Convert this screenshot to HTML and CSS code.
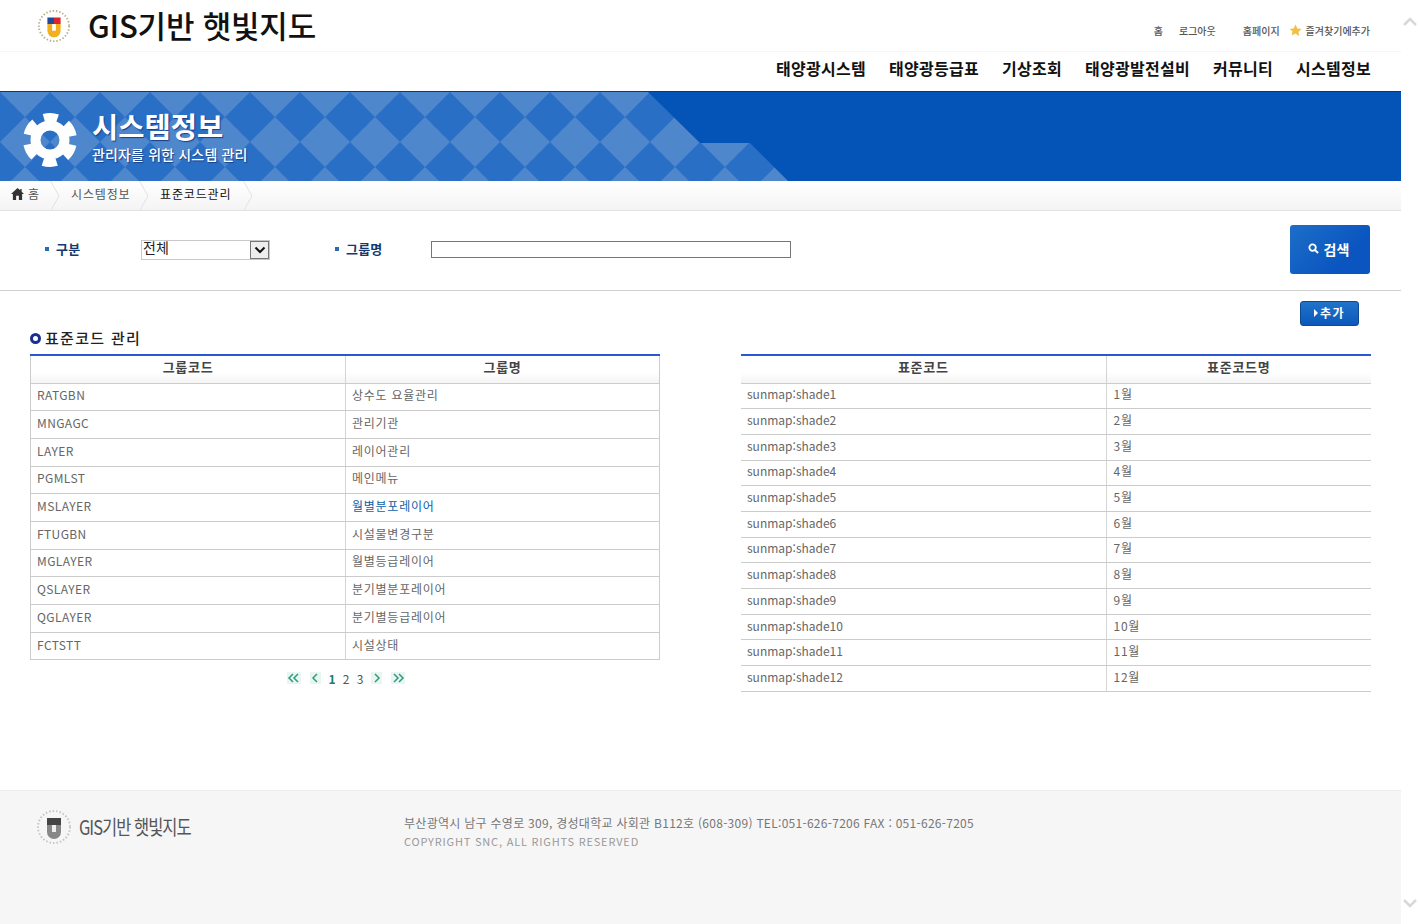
FILE: index.html
```html
<!DOCTYPE html>
<html lang="ko">
<head>
<meta charset="utf-8">
<title>GIS기반 햇빛지도</title>
<link rel="stylesheet" href="styles.css">
</head>
<body>
<div class="page">
  <header class="header">
    <div class="topbar">
      <a class="logo">
        <svg class="seal" viewBox="0 0 36 36" width="34" height="34" aria-hidden="true">
          <circle cx="18" cy="18" r="16" fill="none" stroke="#b9b08a" stroke-width="2" stroke-dasharray="1.5 2"/>
          <rect x="11" y="9" width="7" height="7" fill="#1f4a9c"/>
          <rect x="18" y="9" width="7" height="7" fill="#d8262c"/>
          <path d="M11 16h14v7a7 7 0 0 1-14 0z" fill="#f2b01e"/>
          <path d="M16 16h4v7h-4z" fill="#fff"/>
        </svg>
        <span class="logo-text">GIS기반 햇빛지도</span>
      </a>
      <div class="util">
        <span class="u1">홈</span>
        <span class="u2">로그아웃</span>
        <span class="u3">홈페이지</span>
        <svg class="star" viewBox="0 0 12 12" width="13" height="13" aria-hidden="true"><path d="M6 .5l1.7 3.6 3.9.5-2.9 2.7.8 3.9L6 8.8 2.5 10.7l.8-3.9L.4 4.6l3.9-.5z" fill="#f0c040"/></svg>
        <span class="u4">즐겨찾기에추가</span>
      </div>
    </div>
    <nav class="gnb">
      <a>태양광시스템</a><a>태양광등급표</a><a>기상조회</a><a>태양광발전설비</a><a>커뮤니티</a><a>시스템정보</a>
    </nav>
  </header>

  <section class="banner">
    <svg class="banner-bg" width="800" height="90" aria-hidden="true">
      <defs>
        <pattern id="dia" width="50" height="50" patternUnits="userSpaceOnUse" x="-25" y="0">
          <rect width="50" height="50" fill="#4f87cc"/>
          <path d="M25 0L50 25L25 50L0 25z" fill="#2a6fc6"/>
        </pattern>
      </defs>
      <path d="M0 0H648L700 51H750L789 90H0z" fill="url(#dia)"/>
    </svg>
    <svg class="gear" viewBox="0 0 54 54" width="54" height="54" aria-hidden="true">
      <circle cx="27" cy="27" r="14.5" fill="none" stroke="#fff" stroke-width="10"/>
      <circle cx="27" cy="27" r="23" fill="none" stroke="#fff" stroke-width="8" stroke-dasharray="14 10.09" stroke-dashoffset="-5.04"/>
    </svg>
    <div class="banner-text">
      <h1>시스템정보</h1>
      <p>관리자를 위한 시스템 관리</p>
    </div>
  </section>

  <nav class="crumbs">
    <span class="crumb home">
      <svg viewBox="0 0 14 13" width="13" height="12" aria-hidden="true"><path d="M7 0L0 6.500h2V13h3.500V8.500h3V13H12V6.500h2L11.500 4V1H10v1.500z" fill="#333"/></svg>
      <span>홈</span>
    </span>
    <svg class="sep" viewBox="0 0 10 30" width="10" height="30" aria-hidden="true"><path d="M.5 0l8.500 15L.5 30" fill="none" stroke="#e2e2e2"/></svg>
    <span class="crumb sys">시스템정보</span>
    <svg class="sep" viewBox="0 0 10 30" width="10" height="30" aria-hidden="true"><path d="M.5 0l8.500 15L.5 30" fill="none" stroke="#e2e2e2"/></svg>
    <span class="crumb cur">표준코드관리</span>
    <svg class="sep" viewBox="0 0 10 30" width="10" height="30" aria-hidden="true"><path d="M.5 0l8.500 15L.5 30" fill="none" stroke="#e2e2e2"/></svg>
  </nav>

  <form class="search">
    <label class="lab lab1">구분</label>
    <div class="fakeselect">
      <span class="fs-val">전체</span>
      <span class="fs-arrow"><svg viewBox="0 0 12 8" width="12" height="8" aria-hidden="true"><path d="M1.500 1.500L6 6l4.500-4.500" fill="none" stroke="#111" stroke-width="2"/></svg></span>
    </div>
    <label class="lab lab2">그룹명</label>
    <input class="group-input" type="text">
    <button type="button" class="btn-search">
      <svg viewBox="0 0 12 12" width="11" height="11" aria-hidden="true"><circle cx="5" cy="5" r="3.500" fill="none" stroke="#fff" stroke-width="2"/><path d="M7.500 7.500L11 11" stroke="#fff" stroke-width="2.200"/></svg>
      <span>검색</span>
    </button>
  </form>

  <div class="actions">
    <button type="button" class="btn-add"><i class="tri"></i>추가</button>
  </div>

  <main class="tables">
    <section class="left">
      <h2 class="sec-title"><i class="ring"></i>표준코드 관리</h2>
      <table class="grid boxed">
        <colgroup><col class="c-l1"><col></colgroup>
        <thead><tr><th>그룹코드</th><th>그룹명</th></tr></thead>
        <tbody>
          <tr><td>RATGBN</td><td>상수도 요율관리</td></tr>
          <tr><td>MNGAGC</td><td>관리기관</td></tr>
          <tr><td>LAYER</td><td>레이어관리</td></tr>
          <tr><td>PGMLST</td><td>메인메뉴</td></tr>
          <tr><td>MSLAYER</td><td><a class="hl">월별분포레이어</a></td></tr>
          <tr><td>FTUGBN</td><td>시설물변경구분</td></tr>
          <tr><td>MGLAYER</td><td>월별등급레이어</td></tr>
          <tr><td>QSLAYER</td><td>분기별분포레이어</td></tr>
          <tr><td>QGLAYER</td><td>분기별등급레이어</td></tr>
          <tr><td>FCTSTT</td><td>시설상태</td></tr>
        </tbody>
      </table>
      <div class="pager">
        <i class="pg dbl"><svg viewBox="0 0 14 10" width="14" height="10" aria-hidden="true"><path d="M6 1L2 5l4 4M11 1L7 5l4 4" fill="none" stroke="#2f9a80" stroke-width="1.500"/></svg></i>
        <i class="pg sgl"><svg viewBox="0 0 11 10" width="11" height="10" aria-hidden="true"><path d="M7 1L3 5l4 4" fill="none" stroke="#2f9a80" stroke-width="1.500"/></svg></i>
        <b class="num">1</b><span class="num">2</span><span class="num">3</span>
        <i class="pg sgl2"><svg viewBox="0 0 11 10" width="11" height="10" aria-hidden="true"><path d="M4 1l4 4-4 4" fill="none" stroke="#2f9a80" stroke-width="1.500"/></svg></i>
        <i class="pg dbl"><svg viewBox="0 0 14 10" width="14" height="10" aria-hidden="true"><path d="M3 1l4 4-4 4M8 1l4 4-4 4" fill="none" stroke="#2f9a80" stroke-width="1.500"/></svg></i>
      </div>
    </section>
    <section class="right">
      <table class="grid tight">
        <colgroup><col class="c-r1"><col></colgroup>
        <thead><tr><th>표준코드</th><th>표준코드명</th></tr></thead>
        <tbody>
          <tr><td>sunmap:shade1</td><td>1월</td></tr>
          <tr><td>sunmap:shade2</td><td>2월</td></tr>
          <tr><td>sunmap:shade3</td><td>3월</td></tr>
          <tr><td>sunmap:shade4</td><td>4월</td></tr>
          <tr><td>sunmap:shade5</td><td>5월</td></tr>
          <tr><td>sunmap:shade6</td><td>6월</td></tr>
          <tr><td>sunmap:shade7</td><td>7월</td></tr>
          <tr><td>sunmap:shade8</td><td>8월</td></tr>
          <tr><td>sunmap:shade9</td><td>9월</td></tr>
          <tr><td>sunmap:shade10</td><td>10월</td></tr>
          <tr><td>sunmap:shade11</td><td>11월</td></tr>
          <tr><td>sunmap:shade12</td><td>12월</td></tr>
        </tbody>
      </table>
    </section>
  </main>

  <footer class="footer">
    <div class="f-logo">
      <svg viewBox="0 0 36 36" width="36" height="36" aria-hidden="true">
        <circle cx="18" cy="18" r="16" fill="none" stroke="#c4c4c4" stroke-width="2" stroke-dasharray="1.500 2"/>
        <rect x="11" y="9" width="14" height="7" fill="#444"/>
        <path d="M11 16h14v7a7 7 0 0 1-14 0z" fill="#888"/>
        <path d="M16 16h4v7h-4z" fill="#eee"/>
      </svg>
      <span>GIS기반 햇빛지도</span>
    </div>
    <div class="f-text">
      <p class="addr">부산광역시 남구 수영로 309, 경성대학교 사회관 B112호 (608-309) TEL:051-626-7206 FAX : 051-626-7205</p>
      <p class="copy">COPYRIGHT SNC, ALL RIGHTS RESERVED</p>
    </div>
  </footer>
</div>
<div class="scrollbar" aria-hidden="true">
  <svg viewBox="0 0 14 10" width="14" height="10"><path d="M1 8l6-6 6 6" fill="none" stroke="#d8d8d8" stroke-width="2.500"/></svg>
  <svg viewBox="0 0 14 10" width="14" height="10"><path d="M1 2l6 6 6-6" fill="none" stroke="#d8d8d8" stroke-width="2.500"/></svg>
</div>
</body>
</html>
```
FILE: styles.css
```css
* { box-sizing: border-box; }
html, body { margin: 0; padding: 0; height: 924px; overflow: hidden; background: #fff; }
body {
  display: flex;
  font-family: "Noto Sans CJK KR", "Liberation Sans", sans-serif;
  font-size: 12px;
  color: #555;
}
.page { width: 1401px; height: 924px; display: flex; flex-direction: column; }
.scrollbar {
  width: 17px; height: 924px; padding: 17px 0 16px 1px;
  display: flex; flex-direction: column; justify-content: space-between; align-items: center;
}

/* header */
.header { height: 91px; flex: none; }
.topbar {
  height: 52px; padding: 8px 31px 0 37px;
  display: flex; justify-content: space-between;
  border-bottom: 1px solid #f6f6f6;
}
.logo { display: flex; align-items: flex-start; gap: 17px; }
.seal { flex: none; margin-top: 1px; }
.logo-text {
  font-size: 31px; line-height: 36px; font-weight: 500; color: #111;
  letter-spacing: -0.2px; margin-top: -1px;
  font-family: "Noto Sans CJK KR", sans-serif;
}
.util { display: flex; align-items: center; height: 44px; font-size: 10px; font-weight: 500; color: #555; }
.u1 { margin-right: 16px; }
.u2 { margin-right: 27px; }
.u3 { margin-right: 9px; }
.star { margin-right: 4px; }
.gnb {
  height: 39px; padding: 0 30px 8px 0;
  display: flex; justify-content: flex-end; align-items: center; gap: 23px;
}
.gnb a {
  font-family: "Noto Sans CJK KR", sans-serif;
  font-size: 16px; font-weight: 700; color: #111; letter-spacing: 0.28px;
}

/* banner */
.banner {
  position: relative; height: 90px; flex: none;
  background: #0454b8; border-top: 1px solid #033a80;
  display: flex; align-items: flex-start; padding: 19px 0 0 23px;
  overflow: hidden;
}
.banner-bg { position: absolute; left: 0; top: 0; }
.gear { position: relative; flex: none; margin-top: 2px; }
.banner-text { position: relative; margin-left: 15px; color: #fff; }
.banner-text h1 {
  margin: 0; font-size: 28.5px; line-height: 30px; font-weight: 700; color: #fff;
  text-shadow: 1px 1px 1px #1a3f86;
}
.banner-text p {
  margin: 4px 0 0; font-size: 14px; line-height: 18px; font-weight: 500; color: #fff;
  letter-spacing: .15px;
  text-shadow: 1px 1px 1px #1a3f86;
}

/* breadcrumb */
.crumbs {
  height: 30px; flex: none; display: flex; align-items: center;
  background: linear-gradient(#fff, #f4f4f4);
  border-bottom: 1px solid #e2e2e2;
  font-size: 12px; color: #555; letter-spacing: .85px;
}
.crumb {
  height: 29px; display: flex; align-items: center; gap: 4px; padding-bottom: 4px;
}
.sep { flex: none; }
.home { width: 50px; padding-left: 11px; }
.sys { width: 79px; padding-left: 11px; }
.cur { width: 94px; padding-left: 11px; color: #111; }

/* search */
.search {
  height: 80px; flex: none; position: relative;
  display: flex; align-items: center;
  border-bottom: 1px solid #cfcfcf;
  padding: 0 31px 2px 45px;
}
.lab {
  font-size: 13px; font-weight: 700; color: #143a70; letter-spacing: .2px;
  display: flex; align-items: center; gap: 7px; padding-bottom: 2px;
}
.lab::before { content: ""; width: 4px; height: 4px; background: #2a6cb0; }
.lab1 { width: 96px; }
.lab2 { width: 96px; margin-left: 65px; }
.fakeselect {
  width: 129px; height: 20px; border: 1px solid #c8c8c8;
  display: flex; justify-content: space-between; font-size: 14px; color: #222; line-height: 12px;
  margin-top: 1px;
}
.fs-val { padding-left: 1px; }
.fs-arrow {
  width: 19px; height: 18px; border: 1px solid #777; background: #eee;
  display: flex; align-items: center; justify-content: center;
}
.group-input {
  width: 360px; height: 17px; border: 1px solid #767676; background: #fff; padding: 0;
}
.btn-search {
  margin-left: auto; width: 80px; height: 49px; padding: 0 3px 2px 0; border: 0; border-radius: 3px;
  background: linear-gradient(135deg, #1d6ec8, #0a55c0 70%);
  color: #fff; font: 700 14px "Noto Sans CJK KR", sans-serif;
  display: flex; align-items: center; justify-content: center; gap: 5px;
}

/* actions */
.actions { height: 37px; flex: none; padding: 10px 42px 0 0; display: flex; justify-content: flex-end; }
.btn-add {
  width: 59px; height: 25px; padding: 0 0 2px 0; border: 1px solid #0d4a90; border-radius: 3px;
  background: linear-gradient(#2173c9, #0b58bb);
  color: #fff; font: 700 12px "Noto Sans CJK KR", sans-serif; letter-spacing: 1.4px;
  display: flex; align-items: center; justify-content: center; gap: 2px;
}
.tri { width: 0; height: 0; border-left: 4px solid #fff; border-top: 4px solid transparent; border-bottom: 4px solid transparent; }

/* tables */
.tables { height: 462px; flex: none; display: flex; padding: 0 30px; justify-content: space-between; align-items: flex-start; }
.left { width: 630px; }
.right { width: 630px; padding-top: 26px; }
.sec-title {
  margin: 0 0 5px; height: 21px; padding-bottom: 2px; display: flex; align-items: center; gap: 4px;
  font-size: 15px; font-weight: 500; color: #222; letter-spacing: 1.3px;
}
.ring { width: 11px; height: 11px; border: 3px solid #1a2f8f; border-radius: 50%; margin-top: 2px; }
.grid { width: 630px; border-collapse: collapse; table-layout: fixed; border-top: 2px solid #2a58d0; }
.c-l1 { width: 315px; }
.c-r1 { width: 365px; }
.grid th {
  height: 28px; padding: 0 0 5px; font-size: 13px; font-weight: 700; color: #444; letter-spacing: .7px;
  background: linear-gradient(#fff 60%, #f4f4f4);
  border-bottom: 1px solid #ccc; border-right: 1px solid #d4d4d4;
}
.grid td {
  padding: 0 6px 4px; font-size: 12px; color: #666; letter-spacing: .75px;
  border-bottom: 1px solid #ccc; border-right: 1px solid #d4d4d4; white-space: nowrap;
}
.grid td:first-child { letter-spacing: .4px; }
.tight td:first-child { letter-spacing: 0; }
.tight td:last-child { padding-left: 7px; }
.grid th:last-child, .grid td:last-child { border-right: 0; }
.boxed td { height: 27.7px; }
.tight td { height: 25.7px; }
.boxed { border-left: 1px solid #ccc; border-right: 1px solid #ccc; }
.hl { color: #0b62a8; }
.pager {
  margin-top: 11px; display: flex; justify-content: center; align-items: center;
  height: 14px; font-size: 12px; color: #555;
  padding-left: 2px;
}
.num { width: 14px; text-align: center; font-weight: 400; }
.pager b { color: #1c7a78; font-weight: 700; }
.pg {
  height: 12px; background: #e9f5f1;
  display: flex; align-items: center; justify-content: center;
}
.dbl { width: 14px; }
.sgl { width: 11px; margin: 0 4px 0 9px; }
.sgl2 { width: 11px; margin: 0 9px 0 4px; }

/* footer */
.footer {
  flex: 1; background: #f6f6f6; border-top: 1px solid #ececec;
  display: flex; padding: 18px 0 0 36px; position: relative;
}
.f-logo { display: flex; gap: 7px; width: 368px; align-items: flex-start; color: #555; }
.f-logo span { font-size: 20px; line-height: 36px; letter-spacing: -1.2px; transform: scaleX(.824); transform-origin: left center; white-space: nowrap; }
.f-text p { margin: 0; }
.addr { font-size: 12px; line-height: 16px; color: #777; margin-top: 6px !important; letter-spacing: .28px; }
.copy { font-size: 11px; line-height: 14px; color: #999; margin-top: 3px !important; letter-spacing: .8px; }
```
